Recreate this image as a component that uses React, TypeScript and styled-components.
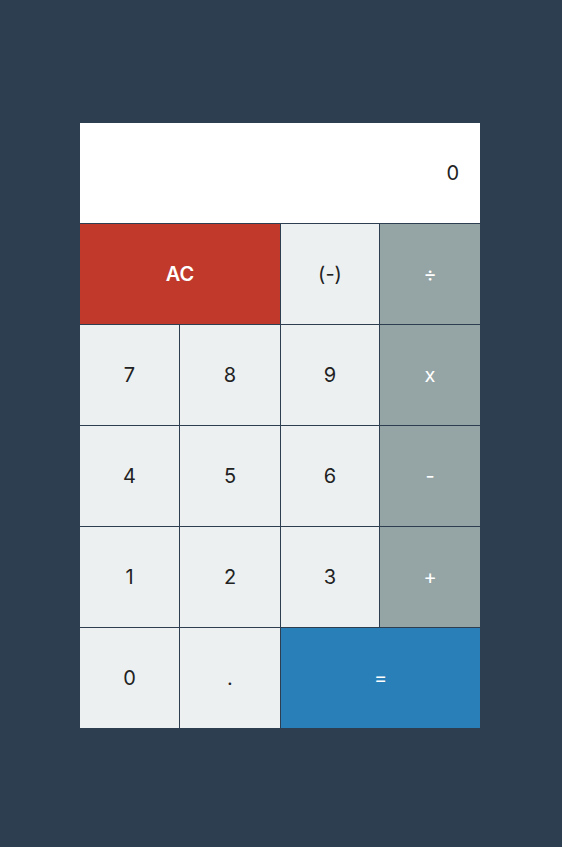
import React from "react";
import styled, { createGlobalStyle } from "styled-components";

const Global = createGlobalStyle`
  html, body { margin: 0; padding: 0; background: #2c3e50; }
  body { font-family: "Inter", "Liberation Sans", sans-serif; }
`;

const Page = styled.div`
  min-height: 847px;
  padding: 123px 0 0 80px;
  box-sizing: border-box;
`;

const Calculator = styled.div`
  width: 400px;
  display: grid;
  grid-template-columns: 99px 100px 98px 100px;
  grid-template-rows: 100px repeat(5, 100px);
  gap: 1px;
  background: #2c3e50;
`;

const Display = styled.div`
  grid-column: 1 / span 4;
  background: #ffffff;
  display: flex;
  align-items: center;
  justify-content: flex-end;
  padding-right: 21px;
  font-size: 20px;
  color: #222222;
`;

type Kind = "digit" | "clear" | "op" | "equals";

const colors: Record<Kind, { bg: string; fg: string }> = {
  digit: { bg: "#ecf0f1", fg: "#222222" },
  clear: { bg: "#c0392b", fg: "#ffffff" },
  op: { bg: "#95a5a6", fg: "#ffffff" },
  equals: { bg: "#2980b9", fg: "#ffffff" },
};

const Key = styled.button<{ $kind: Kind; $span?: number }>`
  grid-column: span ${(p) => p.$span ?? 1};
  border: none;
  margin: 0;
  padding: 0;
  background: ${(p) => colors[p.$kind].bg};
  color: ${(p) => colors[p.$kind].fg};
  font-family: "Inter", "Liberation Sans", sans-serif;
  font-size: 20px;
  font-weight: ${(p) => (p.$kind === "clear" ? 600 : 400)};
  display: flex;
  align-items: center;
  justify-content: center;
  cursor: pointer;
`;

const keys: { label: string; kind: Kind; span?: number }[] = [
  { label: "AC", kind: "clear", span: 2 },
  { label: "(-)", kind: "digit" },
  { label: "÷", kind: "op" },
  { label: "7", kind: "digit" },
  { label: "8", kind: "digit" },
  { label: "9", kind: "digit" },
  { label: "x", kind: "op" },
  { label: "4", kind: "digit" },
  { label: "5", kind: "digit" },
  { label: "6", kind: "digit" },
  { label: "-", kind: "op" },
  { label: "1", kind: "digit" },
  { label: "2", kind: "digit" },
  { label: "3", kind: "digit" },
  { label: "+", kind: "op" },
  { label: "0", kind: "digit" },
  { label: ".", kind: "digit" },
  { label: "=", kind: "equals", span: 2 },
];

export default function App() {
  return (
    <>
      <Global />
      <Page>
        <Calculator>
          <Display>0</Display>
          {keys.map((k) => (
            <Key key={k.label} $kind={k.kind} $span={k.span}>
              {k.label}
            </Key>
          ))}
        </Calculator>
      </Page>
    </>
  );
}
